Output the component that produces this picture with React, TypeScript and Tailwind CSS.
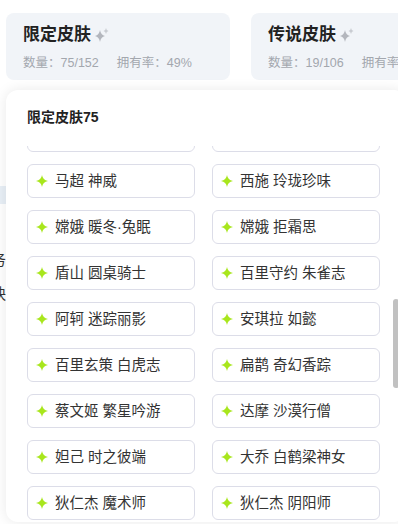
import React from "react";

const rows: [string, string][] = [
  ["貂蝉 仲夏夜之梦", "王昭君 凤凰于飞"],
  ["马超 神威", "西施 玲珑珍味"],
  ["嫦娥 暖冬·兔眠", "嫦娥 拒霜思"],
  ["盾山 圆桌骑士", "百里守约 朱雀志"],
  ["阿轲 迷踪丽影", "安琪拉 如懿"],
  ["百里玄策 白虎志", "扁鹊 奇幻香踪"],
  ["蔡文姬 繁星吟游", "达摩 沙漠行僧"],
  ["妲己 时之彼端", "大乔 白鹤梁神女"],
  ["狄仁杰 魔术师", "狄仁杰 阴阳师"],
];

const font = { fontFamily: '"Liberation Sans", "Noto Sans CJK SC", sans-serif' };

function Sparkle() {
  return (
    <svg width="16" height="16" viewBox="0 0 16 16" className="ml-[3px]">
      <path d="M6 3 Q6.8 8.2 11 9 Q6.8 9.8 6 15 Q5.2 9.8 1 9 Q5.2 8.2 6 3Z" fill="#b3b6bd" />
      <path d="M12 1 Q12.4 3.6 14.5 4 Q12.4 4.4 12 7 Q11.6 4.4 9.5 4 Q11.6 3.6 12 1Z" fill="#c9ccd2" />
    </svg>
  );
}

function Star() {
  return (
    <svg width="12" height="12" viewBox="0 0 12 12" className="shrink-0">
      <path d="M6 0 Q6.8 5.2 12 6 Q6.8 6.8 6 12 Q5.2 6.8 0 6 Q5.2 5.2 6 0Z" fill="#a8e61c" />
    </svg>
  );
}

function Card({ title, count, rate }: { title: string; count: string; rate?: string }) {
  return (
    <div className="w-[224px] h-[67px] shrink-0 rounded-[8px] bg-[#f1f4f8] pl-[17px] pt-[10px]">
      <div className="flex items-center">
        <span className="text-[17px] font-bold text-[#222] leading-[24px]">{title}</span>
        <Sparkle />
      </div>
      <div className="mt-[8px] text-[12.5px] leading-[16px] text-[#a3a7ae] whitespace-nowrap flex gap-[18px]">
        <span>数量：{count}</span>
        <span>拥有率：{rate}</span>
      </div>
    </div>
  );
}

export default function App() {
  return (
    <div className="relative w-[398px] h-[524px] overflow-hidden bg-white" style={font}>
      <div className="flex gap-[21px] pl-[6px] pt-[13px]">
        <Card title="限定皮肤" count="75/152" rate="49%" />
        <Card title="传说皮肤" count="19/106" rate="18%" />
      </div>
      <div className="mt-[106px] h-[18px] w-[20px] bg-[#e8eff6]" />
      <div className="w-[8px] overflow-hidden">
        <div className="-ml-[9px] mt-[48px] text-[15px] leading-[16px] text-[#333]">务</div>
        <div className="-ml-[9px] mt-[18px] text-[15px] leading-[16px] text-[#333]">玦</div>
      </div>

      <div className="absolute left-[6px] top-[90px] w-[400px] h-[432px] rounded-[12px] bg-white shadow-[0_0_14px_rgba(0,0,0,0.09)] overflow-hidden">
        <div className="pl-[21px] pt-[17px] text-[14px] font-bold leading-[20px] text-[#222]">限定皮肤75</div>
        <div className="mt-[19px] h-[376px] overflow-hidden pl-[21px] pr-[26px]">
          <div className="-mt-[28px] grid grid-cols-2 gap-x-[17px] gap-y-[12px]">
            {rows.flat().map((t, i) => (
              <div
                key={i}
                className="h-[34px] rounded-[6px] border border-[#dcdde8] flex items-center pl-[8px] gap-[7px]"
              >
                <Star />
                <span className="text-[14.5px] text-[#333] leading-[20px] whitespace-nowrap">{t}</span>
              </div>
            ))}
          </div>
        </div>
        <div className="absolute left-[387px] top-[209px] w-[6px] h-[89px] rounded-[3px] bg-[#c1c1c1]" />
      </div>
    </div>
  );
}
